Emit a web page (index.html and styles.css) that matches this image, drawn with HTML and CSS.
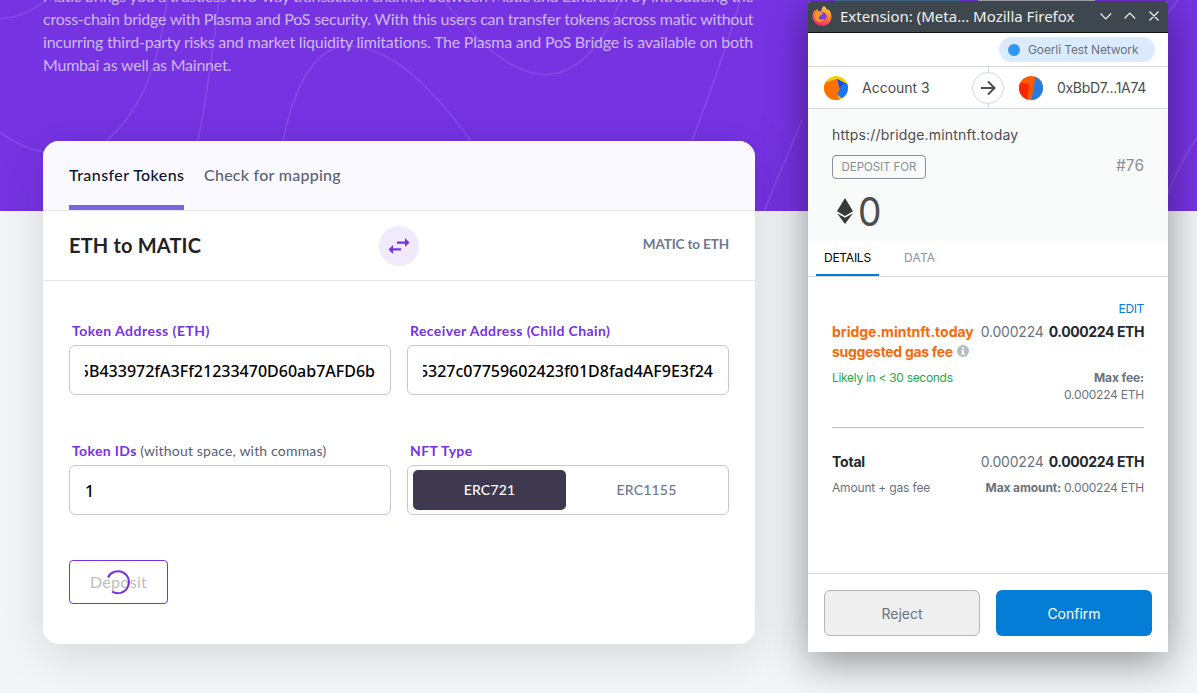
FILE: index.html
```html
<!DOCTYPE html>
<html lang="en">
<head>
<meta charset="utf-8">
<title>Bridge</title>
<link rel="stylesheet" href="styles.css">
</head>
<body>
<main class="page">
  <header class="hero">
    <svg class="waves" width="1197" height="211" viewBox="0 0 1197 211" fill="none">
      <path d="M0 18.500C18 18 34 10 46 0M0 132C14 143 28 149 44 152M167 0C161 50 148 105 106 141M219 0C213 50 207 95 198 141M283 141C290 104 309 46 347 46C392 46 433 89 471 141M443 0C466 26 503 74 545 74.500C582 75 607 35 621 0M740 0C727 49 709 94 692 141M764 211C779 175 791 146 802 120M1163 205C1172 182 1184 156 1197 138M1163 20L1178 0"/>
    </svg>
    <p class="intro">
      <span class="l1">Matic brings you a trustless two-way transaction channel between Matic and Ethereum by introducing the</span>
      <span class="l2">cross-chain bridge with Plasma and PoS security. With this users can transfer tokens across matic without</span>
      <span class="l3">incurring third-party risks and market liquidity limitations. The Plasma and PoS Bridge is available on both</span>
      <span class="l4">Mumbai as well as Mainnet.</span>
    </p>
  </header>

  <section class="card">
    <nav class="tabs">
      <a class="tab tab-active">Transfer Tokens</a>
      <a class="tab tab-map">Check for mapping</a>
    </nav>
    <div class="direction">
      <h2 class="from">ETH to MATIC</h2>
      <button class="swap" aria-label="Swap">
        <svg width="22" height="16" viewBox="0 0 22 16" fill="#7533e2"><path d="M9 3.500h8V0l4.500 4.500L17 9V5.800H9zM13 10.300H5V7L.5 11.500 5 16v-3.400h8z"/></svg>
      </button>
      <span class="to">MATIC to ETH</span>
    </div>
    <div class="form">
      <div class="field">
        <label><b class="n1">Token Address (ETH)</b></label>
        <div class="input"><span class="clip"><span class="v1">5B433972fA3Ff21233470D60ab7AFD6b</span></span></div>
      </div>
      <div class="field">
        <label><b class="n2">Receiver Address (Child Chain)</b></label>
        <div class="input"><span class="clip"><span class="v2">5327c07759602423f01D8fad4AF9E3f24</span></span></div>
      </div>
      <div class="field">
        <label><b class="n3">Token IDs</b> <span class="n4">(without space, with commas)</span></label>
        <div class="input one">1</div>
      </div>
      <div class="field">
        <label><b class="n5">NFT Type</b></label>
        <div class="input toggle"><span class="opt on">ERC721</span><span class="opt">ERC1155</span></div>
      </div>
    </div>
    <button class="deposit"><span>Deposit</span>
      <svg class="spinner" width="26" height="26" viewBox="0 0 26 26" fill="none" stroke="#7533e2" stroke-width="2"><path d="M3 8.500A11 11 0 1 1 7.200 22.600"/></svg>
    </button>
  </section>

  <div class="behind"><i class="b1"></i><i class="b2"></i><i class="b3"></i></div>
  <aside class="popup">
    <div class="titlebar">
      <svg width="20" height="20" viewBox="0 0 20 20">
        <defs>
          <linearGradient id="fx" x1=".8" y1="0" x2=".3" y2="1"><stop offset="0" stop-color="#ffe14a"/><stop offset=".45" stop-color="#ff7b2d"/><stop offset="1" stop-color="#f0257c"/></linearGradient>
        </defs>
        <path fill="url(#fx)" d="M12 0c1.600 1.200 2.600 2.500 3.200 4l1-.8c2.300 2 3.500 4.800 3.200 8.200C19 16.400 15 19.700 10 19.700S.7 16 .5 10.800C.4 8 1.300 5.500 3 3.500L3.400 5 5.200 2.400 6 5l3 .2C9.300 3 10.400 1.200 12 0z"/>
        <circle cx="10.300" cy="10.500" r="4.300" fill="#7543d8"/>
        <path fill="#ff9b2d" d="M3.500 6.500c2-1.300 4-.8 5.300.3l2 .2c.2 1-.6 1.600-2.200 2-.4 1.600-1.800 1.500-2.100 2.800.6 2.500 4.300 2.500 6.300.8-.6 3-6 4.800-9 1.400-1.600-1.900-1.700-5-.3-7.500z"/>
      </svg>
      <span class="wtitle">Extension: (Meta... Mozilla Firefox</span>
      <svg class="winctl" width="62" height="14" viewBox="0 0 62 14" fill="none" stroke="#eff0f1" stroke-width="1.200"><path d="M1.500 4.500l5.300 5.300 5.300-5.300M25.500 9.500l5.300-5.300 5.300 5.300M50.500 2.500l9 9M59.500 2.500l-9 9"/></svg>
    </div>
    <div class="network"><span class="pill"><i></i><span class="goerli">Goerli Test Network</span></span></div>
    <div class="accounts">
      <svg class="av" width="24" height="24" viewBox="0 0 24 24"><clipPath id="c"><circle cx="12" cy="12" r="12"/></clipPath><g clip-path="url(#c)"><path fill="#f3cf05" d="M0 0h24v24H0z"/><path fill="#ff7003" d="M0 7l12-4 4 10-3 6 3 5H0z"/><path fill="#2149e0" d="M12.500 2.500L23 8l-6 9z"/><path fill="#1a77f2" d="M17.500 10l6.500-4v12l-6 4.500-5-4z"/></g></svg>
      <span class="acc">Account 3</span>
      <span class="arrow"><svg width="16" height="16" viewBox="0 0 16 16" fill="none" stroke="#4d4d4d" stroke-width="2"><path d="M1 8h13.200M8 1.500L14.500 8 8 14.500"/></svg></span>
      <svg class="av" width="24" height="24" viewBox="0 0 24 24"><g clip-path="url(#c)"><path fill="#fb5c03" d="M0 0h24v24H0z"/><path fill="#fa2502" d="M0 6.500l10 1.500-1.500 16H0z"/><path fill="#257be2" d="M16.500 0H24v24H12.500z"/></g></svg>
      <span class="addr">0xBbD7...1A74</span>
    </div>
    <div class="summary">
      <div class="origin"><span>https://bridge.mintnft.today</span></div>
      <div class="action"><span class="tag"><span>DEPOSIT FOR</span></span><span class="nonce">#76</span></div>
      <div class="amount"><svg width="16" height="26" viewBox="0 0 16 26" fill="#393939"><path d="M8 0l8 13.200-8 4.700-8-4.700zM0 15.200l8 4.600 8-4.600L8 26z"/></svg><span>0</span></div>
    </div>
    <div class="ptabs"><span class="ptab act"><span>DETAILS</span></span><span class="ptab dat"><span>DATA</span></span></div>
    <div class="details">
      <div class="edit"><span>EDIT</span></div>
      <div class="row">
        <div class="gas"><span class="g1">bridge.mintnft.today</span><br><span class="g2">suggested gas fee</span>
          <svg width="12" height="12" viewBox="0 0 12 12"><circle cx="6" cy="6" r="6" fill="#b8bdc2"/><path fill="#fff" d="M5 2h2v1.700H5zM4.300 5H7v3.500h.9v1H4.200v-1H5V6h-.7z"/></svg>
        </div>
        <div class="val"><span class="lt">0.000224</span><b>0.000224 ETH</b></div>
      </div>
      <div class="row sub"><span class="likely">Likely in &lt; 30 seconds</span><div class="max"><b class="mf">Max fee:</b><br><span class="me">0.000224 ETH</span></div></div>
      <div class="row total"><b class="tt">Total</b><div class="val"><span class="lt">0.000224</span><b>0.000224 ETH</b></div></div>
      <div class="row foot"><span class="af">Amount + gas fee</span><div><b class="ma">Max amount:</b><span class="me">0.000224 ETH</span></div></div>
    </div>
    <div class="buttons"><button class="reject"><span>Reject</span></button><button class="confirm"><span>Confirm</span></button></div>
  </aside>
</main>
</body>
</html>
```
FILE: styles.css
```css
* { box-sizing: border-box; }
body { margin: 0; width: 1197px; height: 693px; overflow: hidden; background: #f3f6f9; font-family: Lato, "Noto Sans", sans-serif; }
button { font: inherit; padding: 0; margin: 0; border: 0; }
.page { position: relative; height: 693px; overflow: hidden; }
.hero { position: relative; height: 211px; background: #7533e2; overflow: hidden; }
.waves { position: absolute; left: 0; top: 0; }
.waves path { stroke: rgba(255,255,255,.12); stroke-width: 1.500; }
.intro { position: relative; margin: -16px 0 0 43px; font-size: 16px; line-height: 23px; color: rgba(255,255,255,.66); white-space: nowrap; }
.intro span { display: table; }
.l1 { letter-spacing: -.3px; }
.l2 { letter-spacing: -.245px; }
.l3 { letter-spacing: -.21px; }
.l4 { letter-spacing: -.23px; }

.card { position: relative; margin: -70px 0 0 43px; width: 712px; height: 503px; border-radius: 16px; background: #fff; box-shadow: 0 10px 50px rgba(0,0,0,.13); }
.tabs { height: 70px; display: flex; gap: 20px; padding-left: 26px; background: #faf9ff; border-bottom: 1px solid #e6e6e9; border-radius: 16px 16px 0 0; }
.tab { height: 69px; line-height: 67px; font-size: 16px; font-weight: 500; color: #5a6272; white-space: nowrap; }
.tab-active { width: 115px; letter-spacing: .42px; color: #0b1530; border-bottom: 5px solid #7568dc; }
.tab-map { letter-spacing: .26px; }
.direction { height: 70px; display: grid; grid-template-columns: 1fr 40px 1fr; align-items: center; padding: 0 26px; border-bottom: 1px solid #e6e6e9; }
.from { margin: 0; padding-bottom: 2px; font-size: 20px; font-weight: 700; letter-spacing: .17px; color: #222; }
.swap { width: 40px; height: 40px; border-radius: 50%; background: #f1eafc; display: flex; align-items: center; justify-content: center; }
.to { justify-self: end; padding-bottom: 3px; font-size: 13.500px; font-weight: 700; letter-spacing: -.13px; color: #6e7890; }
.form { display: grid; grid-template-columns: 322px 322px; gap: 46px 16px; padding: 40px 26px 0; }
.field label { display: block; height: 24px; padding-left: 3px; line-height: 20px; font-size: 14px; color: #566076; white-space: nowrap; }
.field label b { color: #7533e2; font-weight: 700; }
.n1 { letter-spacing: .48px; }
.n2 { letter-spacing: .4px; }
.n3, .n5 { letter-spacing: .35px; }
.n4 { letter-spacing: .18px; }
.input { height: 50px; border: 1px solid #c6c8d9; border-radius: 6px; padding: 0 15px; display: flex; align-items: center; font: 500 16px/24px "Noto Sans", sans-serif; color: #000; }
.clip { flex: 1; display: flex; justify-content: flex-end; overflow: hidden; white-space: nowrap; padding-top: 1px; }
.one { padding-top: 1px; }
.toggle { padding: 4px 5px; font: 500 14px/20px Lato, sans-serif; letter-spacing: .2px; }
.opt { width: 153px; height: 40px; border-radius: 5px; display: flex; align-items: center; justify-content: center; color: #6e7890; flex: none; }
.opt + .opt { width: 161px; }
.opt.on { background: #3e394f; color: #fff; }
.deposit { position: relative; display: flex; align-items: center; justify-content: center; margin: 45px 0 0 26px; width: 99px; height: 44px; border: 1px solid #7533e2; border-radius: 4px; background: #fff; color: #bdbdbd; font-size: 16px; letter-spacing: .3px; }
.deposit span { padding-bottom: 2px; }
.spinner { position: absolute; left: 35px; top: 8px; }

.behind { position: absolute; left: 835px; top: 0; width: 260px; height: 1px; display: flex; }
.b1 { width: 125px; background: #45759c; }
.b2 { width: 18px; background: #7533e2; }
.b3 { width: 117px; background: #b3b0bd; }
.popup { position: absolute; left: 808px; top: 1px; width: 360px; height: 651px; background: #fff; border-radius: 3px 3px 0 0; box-shadow: 0 10px 42px rgba(0,0,0,.42); font-family: Inter, sans-serif; color: #4d4d4d; display: flex; flex-direction: column; white-space: nowrap; }
.titlebar { height: 32px; background: #3f474e; border-bottom: 1px solid #101214; border-radius: 3px 3px 0 0; display: flex; align-items: center; padding: 0 0 2px 4px; color: #eff0f1; font: 15px/20px "Noto Sans", sans-serif; }
.wtitle { margin-left: 8px; width: 259px; }
.network { height: 34px; border-bottom: 1px solid #d6d9dc; display: flex; justify-content: flex-end; padding: 4px 13px 0 0; }
.pill { width: 156px; height: 25px; border-radius: 13px; background: #d9ebfc; display: flex; align-items: center; padding-left: 9px; gap: 8px; font-size: 12px; color: #6a737d; }
.pill i { width: 12px; height: 12px; border-radius: 50%; background: #3098f1; }
.goerli { letter-spacing: -.12px; }
.accounts { height: 42px; border-bottom: 1px solid #d6d9dc; display: flex; align-items: center; padding-left: 16px; font-size: 14px; background: linear-gradient(#d6d9dc,#d6d9dc) 180px 0/1px 100% no-repeat; }
.acc { margin-left: 14px; width: 110px; }
.arrow { width: 32px; height: 32px; border: 1px solid #d6d9dc; border-radius: 50%; background: #fff; display: flex; align-items: center; justify-content: center; margin-right: 15px; flex: none; }
.av { flex: none; }
.addr { margin-left: 14px; letter-spacing: -.3px; }
.summary { height: 132px; background: #f9fafa; padding: 16px 24px 0; }
.origin { height: 20px; line-height: 20px; font-size: 14px; letter-spacing: .19px; }
.action { display: flex; justify-content: space-between; margin-top: 10px; }
.tag { width: 94px; height: 24px; border: 1px solid #8d9095; border-radius: 4px; font-size: 11.500px; letter-spacing: -.05px; color: #8b8f95; display: flex; align-items: center; justify-content: center; }
.nonce { font-size: 15.500px; line-height: 21px; color: #8b8f95; }
.amount { height: 48px; margin-top: 8px; display: flex; align-items: center; padding-left: 5px; gap: 5px; font-size: 40px; }
.amount span { transform: scaleX(.93); transform-origin: left; }
.ptabs { height: 36px; border-bottom: 1px solid #d6d9dc; display: flex; padding-left: 8px; font-size: 12px; line-height: 34px; color: #8b929d; }
.ptab { padding: 0 8px; height: 35px; }
.act { width: 63px; letter-spacing: -.25px; color: #000; border-bottom: 2px solid #037dd6; margin-right: 17px; }
.dat { letter-spacing: .2px; }
.details { flex: 1; padding: 22px 24px 0; font-size: 14px; line-height: 20px; color: #24292e; }
.edit { height: 23px; text-align: right; font-size: 12px; letter-spacing: -.35px; color: #037dd6; }
.row { display: flex; justify-content: space-between; }
.gas { color: #f66a0a; font-weight: 700; }
.g2 { letter-spacing: -.3px; }
.gas svg { margin-left: 1px; }
.val .lt { color: #6a737d; margin-right: 5px; letter-spacing: -.2px; }
.val b { letter-spacing: -.4px; }
.sub { height: 60px; margin-top: 6px; font-size: 12px; line-height: 17px; color: #6a737d; border-bottom: 1px solid #bbc0c5; text-align: right; padding-top: 1px; }
.likely { color: #28a745; letter-spacing: -.3px; }
.mf, .ma { letter-spacing: -.1px; }
.me { letter-spacing: -.22px; }
.total { margin-top: 24px; }
.tt { letter-spacing: -.2px; }
.foot { margin-top: 7px; font-size: 12px; line-height: 18px; color: #6a737d; }
.af { letter-spacing: -.16px; }
.ma { margin-right: 3px; }
.buttons { height: 79px; border-top: 1px solid #d6d9dc; padding: 16px; display: grid; grid-template-columns: 156px 156px; gap: 16px; font-size: 14px; letter-spacing: .15px; }
.buttons button { height: 46px; border-radius: 6px; }
.buttons .reject { background: #efefef; border: 1px solid #b3b5b8; color: #6a737d; }
.confirm { background: #037dd6; color: #fff; }
```
